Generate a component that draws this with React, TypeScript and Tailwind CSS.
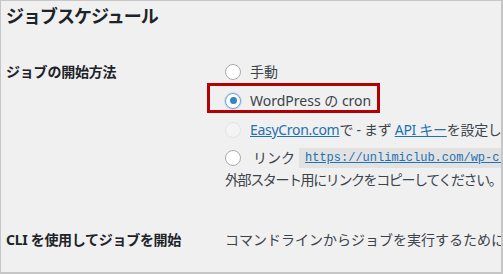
import React from "react";

type RadioState = "off" | "on" | "disabled";

const Radio: React.FC<{ state: RadioState }> = ({ state }) => {
  if (state === "on") {
    return (
      <span className="flex h-4 w-4 shrink-0 items-center justify-center rounded-full border border-[#72a1d6] bg-white shadow-[0_0_0_1px_rgba(114,161,214,0.25)]">
        <span className="h-[7px] w-[7px] rounded-full bg-[#3582c4]" />
      </span>
    );
  }
  if (state === "disabled") {
    return <span className="h-4 w-4 shrink-0 rounded-full border border-[#e4e4e4] bg-[#f4f4f4]" />;
  }
  return <span className="h-4 w-4 shrink-0 rounded-full border border-[#a8abaf] bg-white" />;
};

const App: React.FC = () => {
  return (
    <div
      className="h-[274px] w-[503px] overflow-hidden border-t border-l border-r-2 border-b-2 border-[#c6c6c6] bg-[#f0f0f1] text-[14px] text-[#3c434a]"
      style={{ fontFamily: '"Noto Sans", "Noto Sans CJK JP", sans-serif' }}
    >
      {/* Section title */}
      <h2 className="pl-[5px] pt-[3px] text-[18px] leading-[24px] font-bold tracking-[-1px] text-[#1d2327]">
        ジョブスケジュール
      </h2>

      {/* Start method */}
      <div className="mt-[29px] flex whitespace-nowrap">
        <div className="w-[224px] shrink-0 pl-[5px] text-[14px] leading-[29px] font-bold tracking-[-0.2px] text-[#1d2327]">
          ジョブの開始方法
        </div>
        <div className="flex min-w-0 flex-col">
          <label className="flex h-[29px] items-center">
            <Radio state="off" />
            <span className="ml-[9px]">手動</span>
          </label>

          <div className="relative flex h-[29px] items-center">
            <Radio state="on" />
            <span className="ml-[9px]">WordPress の cron</span>
            {/* highlight annotation */}
            <span className="pointer-events-none absolute -left-[18px] top-[-3px] h-[30px] w-[173px] border-[3px] border-[#b30000]" />
          </div>

          <label className="flex h-[29px] items-center tracking-[-0.3px]">
            <Radio state="disabled" />
            <span className="ml-[9px]">
              <a className="text-[#2271b1] underline">EasyCron.com</a>で - まず{" "}
              <a className="text-[#2271b1] underline">API キー</a>を設定してください。
            </span>
          </label>

          <label className="flex h-[27px] items-center">
            <Radio state="off" />
            <span className="ml-[12px]">リンク</span>
            <code
              className="ml-[4px] bg-[#e2e2e2] px-[6px] text-[12px] leading-[20px] text-[#2271b1] underline"
              style={{ fontFamily: '"Liberation Mono", monospace' }}
            >
              https://unlimiclub.com/wp-cron.php?_wpnonce=
            </code>
          </label>
          <p className="leading-[18px] tracking-[-1.4px]">外部スタート用にリンクをコピーしてください。</p>
        </div>
      </div>

      {/* CLI */}
      <div className="mt-[36px] flex whitespace-nowrap">
        <div className="w-[224px] shrink-0 pl-[5px] leading-[29px] font-bold tracking-[-0.3px] text-[#1d2327]">
          CLI を使用してジョブを開始
        </div>
        <div className="leading-[29px]">コマンドラインからジョブを実行するために WP-CLI を使用します。</div>
      </div>
    </div>
  );
};

export default App;
